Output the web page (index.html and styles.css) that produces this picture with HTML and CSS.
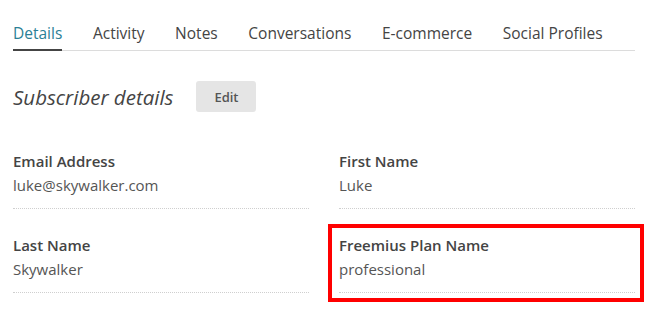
FILE: index.html
```html
<!DOCTYPE html>
<html lang="en">
<head>
<meta charset="utf-8">
<title>Subscriber details</title>
<link rel="stylesheet" href="styles.css">
</head>
<body>
<div class="page">
  <ul class="tabs">
    <li class="tab active">Details</li>
    <li class="tab">Activity</li>
    <li class="tab">Notes</li>
    <li class="tab">Conversations</li>
    <li class="tab">E-commerce</li>
    <li class="tab">Social Profiles</li>
  </ul>
  <div class="header">
    <h2 class="title">Subscriber details</h2>
    <button class="btn">Edit</button>
  </div>
  <div class="fields">
    <div class="field">
      <div class="label">Email Address</div>
      <div class="value">luke@skywalker.com</div>
    </div>
    <div class="field">
      <div class="label">First Name</div>
      <div class="value">Luke</div>
    </div>
    <div class="field">
      <div class="label">Last Name</div>
      <div class="value">Skywalker</div>
    </div>
    <div class="field highlighted">
      <div class="label">Freemius Plan Name</div>
      <div class="value">professional</div>
    </div>
  </div>
</div>
</body>
</html>
```

FILE: styles.css
```css
* { box-sizing: border-box; }
html, body {
  margin: 0;
  padding: 0;
  background: #fff;
}
body {
  font-family: "Open Sans", "Liberation Sans", sans-serif;
  color: #444;
}
.page {
  padding: 23px 12px 17px 13px;
  min-height: 310px;
}
.tabs {
  list-style: none;
  margin: 0;
  padding: 0;
  display: flex;
  gap: 30.6px;
  border-bottom: 1px solid #dcdcdc;
}
.tab {
  font-size: 15.5px;
  line-height: 20px;
  padding-bottom: 6px;
  margin-bottom: -1px;
  border-bottom: 2px solid transparent;
  color: #444;
}
.tab.active {
  color: #2b7f96;
  border-bottom-color: #444;
}
.header {
  margin-top: 30px;
  display: flex;
  align-items: center;
  gap: 23px;
  height: 31px;
}
.title {
  margin: 0;
  font-size: 20.5px;
  line-height: 28px;
  font-style: italic;
  font-weight: 400;
  color: #444;
}
.btn {
  font-family: inherit;
  width: 60px;
  height: 31px;
  border: 0;
  border-radius: 3px;
  background: #e5e5e5;
  color: #555;
  font-size: 13px;
  font-weight: 600;
  padding: 0;
}
.fields {
  margin-top: 39px;
  display: grid;
  grid-template-columns: 1fr 1fr;
  column-gap: 30px;
  row-gap: 26px;
}
.field {
  position: relative;
  padding-bottom: 9px;
  border-bottom: 1px dotted #cfcfcf;
}
.label {
  font-size: 15px;
  line-height: 20px;
  font-weight: 600;
  color: #444;
}
.value {
  font-size: 15px;
  line-height: 28px;
  color: #555;
}
.highlighted::after {
  content: "";
  position: absolute;
  top: -11px;
  left: -11px;
  right: -9px;
  bottom: -10px;
  border: 4px solid #f00;
}
```
